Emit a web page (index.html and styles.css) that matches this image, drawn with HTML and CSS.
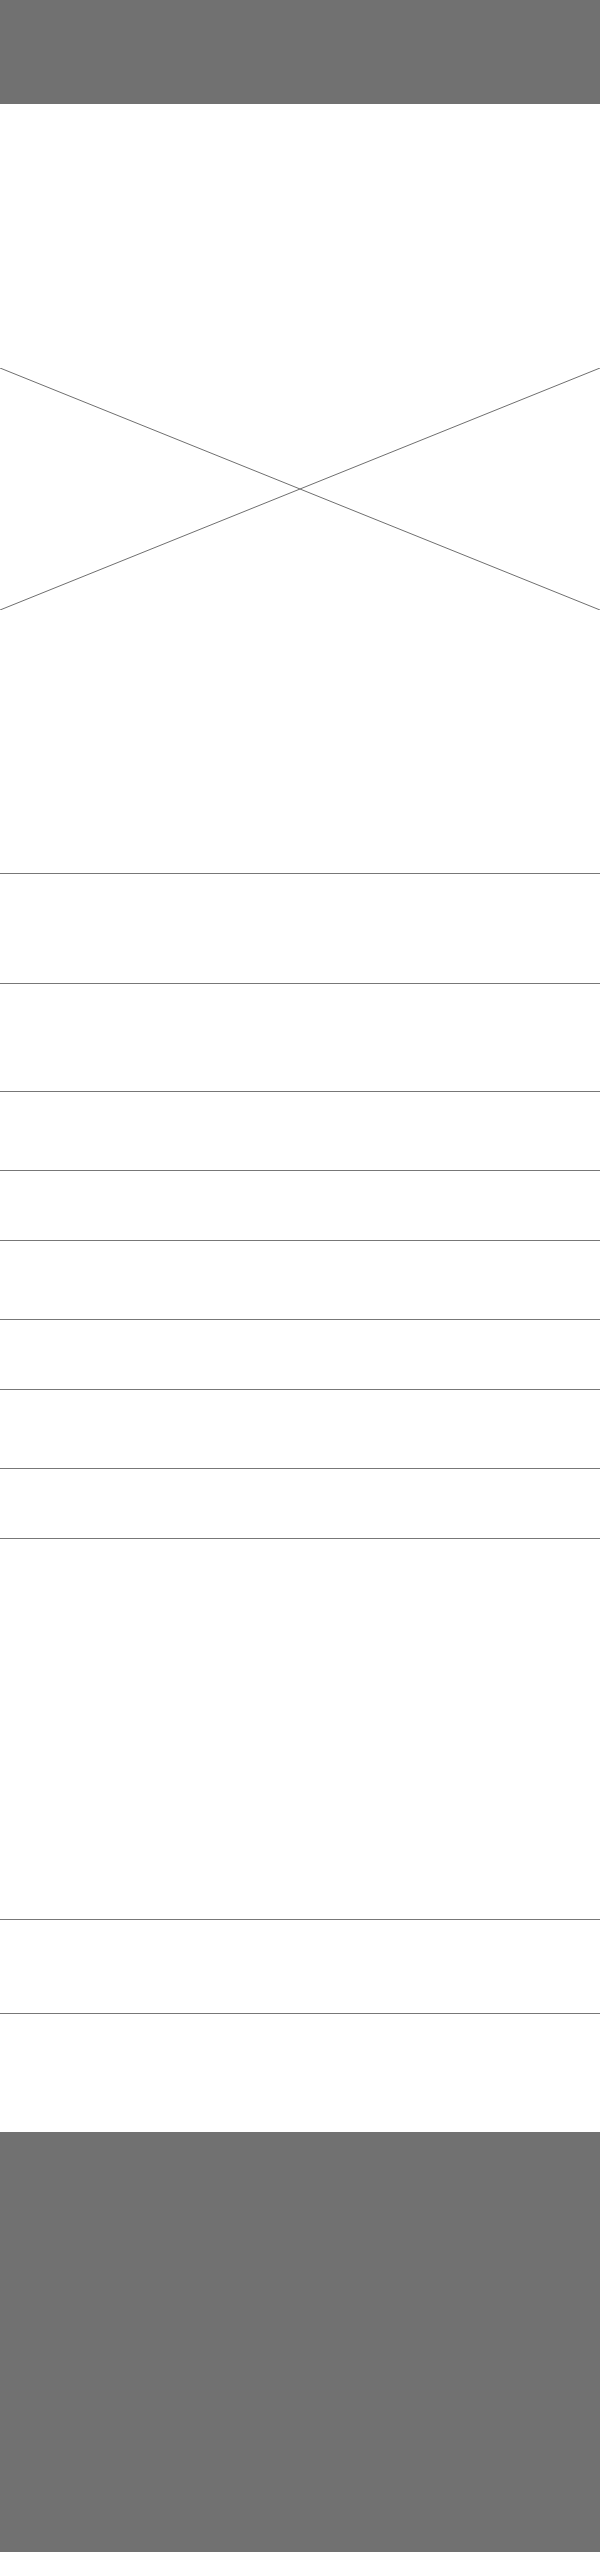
FILE: index.html
```html
<!DOCTYPE html>
<html>
<head>
<meta charset="utf-8">
<link rel="stylesheet" href="styles.css">
</head>
<body>
<header class="bar top"></header>
<main class="page">
  <section class="hero">
    <svg class="placeholder" viewBox="0 0 600 242" preserveAspectRatio="none">
      <line x1="0" y1="0" x2="600" y2="242"/>
      <line x1="0" y1="242" x2="600" y2="0"/>
    </svg>
  </section>
  <div class="row r110"></div>
  <div class="row r108"></div>
  <div class="row r79"></div>
  <div class="row r70"></div>
  <div class="row r79"></div>
  <div class="row r70"></div>
  <div class="row r79"></div>
  <div class="row r70"></div>
  <div class="row r381"></div>
  <div class="row r94"></div>
  <div class="row r119"></div>
</main>
<footer class="bar bottom"></footer>
</body>
</html>
```
FILE: styles.css
```css
html, body {
  margin: 0;
  padding: 0;
  background: #ffffff;
  font-family: "Liberation Sans", Arial, sans-serif;
}
.bar {
  background: #717171;
  display: block;
}
.top { height: 104px; }
.bottom { height: 420px; }
.page { display: flex; flex-direction: column; }
.hero {
  height: 769px;
  display: flex;
  flex-direction: column;
  padding-top: 264px;
  box-sizing: border-box;
}
.placeholder {
  display: block;
  width: 600px;
  height: 242px;
}
.placeholder line {
  stroke: #6f6f6f;
  stroke-width: 1;
}
.row {
  border-top: 1px solid #777777;
  box-sizing: border-box;
}
.r110 { height: 110px; }
.r108 { height: 108px; }
.r79 { height: 79px; }
.r70 { height: 70px; }
.r381 { height: 381px; }
.r94 { height: 94px; }
.r119 { height: 119px; }
```
